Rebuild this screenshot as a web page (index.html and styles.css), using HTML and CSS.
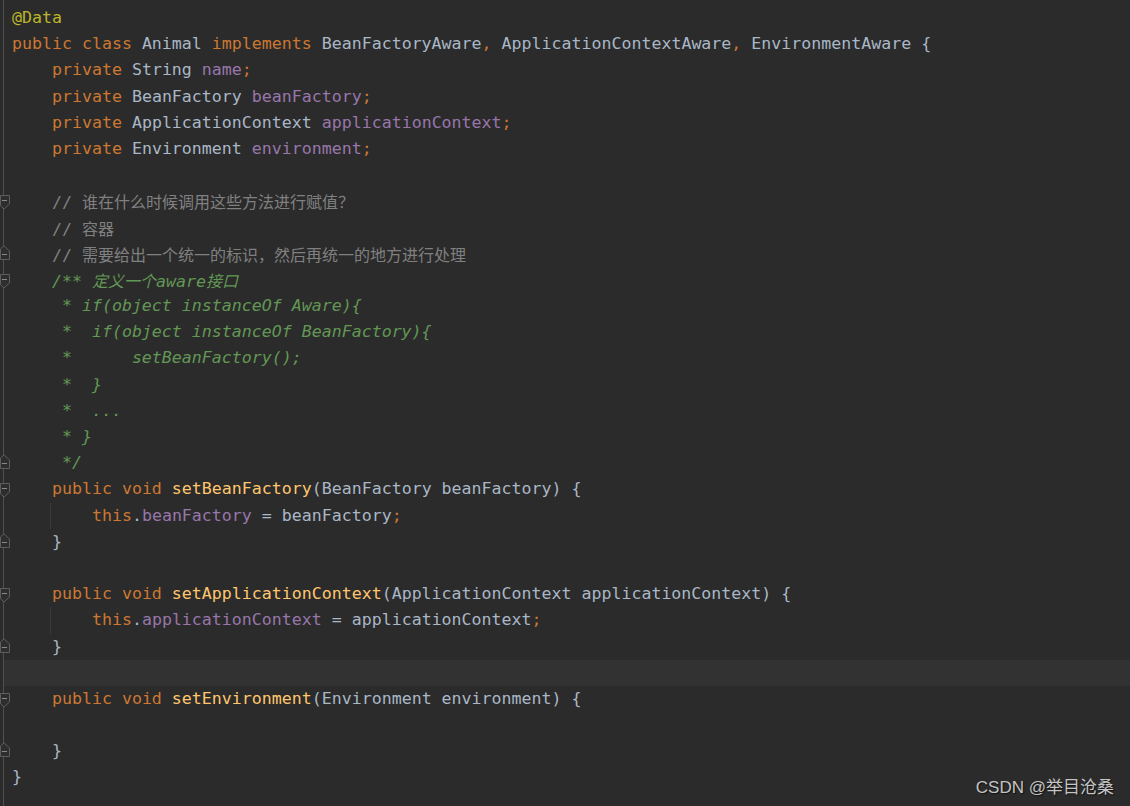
FILE: index.html
```html
<!doctype html>
<html>
<head>
	<meta charset='utf-8'>
	<title>Animal.java</title>

	<link rel="stylesheet" href="styles.css">
</head>
<body>

	<div class='editor'>
		<div class='line'><span class='gutter'></span><span class='code'><span class='ann'>@Data</span></span></div>
		<div class='line'><span class='gutter'></span><span class='code'><span class='kw'>public class </span>Animal <span class='kw'>implements </span>BeanFactoryAware<span class='kw'>, </span>ApplicationContextAware<span class='kw'>, </span>EnvironmentAware {</span></div>
		<div class='line'><span class='gutter'></span><span class='code'>    <span class='kw'>private </span>String <span class='fld'>name</span><span class='kw'>;</span></span></div>
		<div class='line'><span class='gutter'></span><span class='code'>    <span class='kw'>private </span>BeanFactory <span class='fld'>beanFactory</span><span class='kw'>;</span></span></div>
		<div class='line'><span class='gutter'></span><span class='code'>    <span class='kw'>private </span>ApplicationContext <span class='fld'>applicationContext</span><span class='kw'>;</span></span></div>
		<div class='line'><span class='gutter'></span><span class='code'>    <span class='kw'>private </span>Environment <span class='fld'>environment</span><span class='kw'>;</span></span></div>
		<div class='line'><span class='gutter'></span><span class='code'></span></div>

		<!-- comment block -->
		<div class='line'><span class='gutter'><svg class='fold down' width='10' height='15'><path d='M0.5 0.5H9.5V9L4 14L0.5 10.8Z'/><line x1='2' y1='5.5' x2='7' y2='5.5'/></svg></span><span class='code cm'>    // <span class='cjk'>谁在什么时候调用这些方法进行赋值？</span></span></div>
		<div class='line'><span class='gutter'></span><span class='code cm'>    // <span class='cjk'>容器</span></span></div>
		<div class='line'><span class='gutter'><svg class='fold up' width='10' height='15'><path d='M0.5 14.5H9.5V6L4 0.8L0.5 4Z'/><line x1='2' y1='9.5' x2='7' y2='9.5'/></svg></span><span class='code cm'>    // <span class='cjk'>需要给出一个统一的标识，然后再统一的地方进行处理</span></span></div>
		<div class='line'><span class='gutter'><svg class='fold down' width='10' height='15'><path d='M0.5 0.5H9.5V9L4 14L0.5 10.8Z'/><line x1='2' y1='5.5' x2='7' y2='5.5'/></svg></span><span class='code doc'>    /** <span class='cjk'>定义一个</span>aware<span class='cjk'>接口</span></span></div>
		<div class='line'><span class='gutter'></span><span class='code doc'>     * if(object instanceOf Aware){</span></div>
		<div class='line'><span class='gutter'></span><span class='code doc'>     *  if(object instanceOf BeanFactory){</span></div>
		<div class='line'><span class='gutter'></span><span class='code doc'>     *      setBeanFactory();</span></div>
		<div class='line'><span class='gutter'></span><span class='code doc'>     *  }</span></div>
		<div class='line'><span class='gutter'></span><span class='code doc'>     *  ...</span></div>
		<div class='line'><span class='gutter'></span><span class='code doc'>     * }</span></div>
		<div class='line'><span class='gutter'><svg class='fold up' width='10' height='15'><path d='M0.5 14.5H9.5V6L4 0.8L0.5 4Z'/><line x1='2' y1='9.5' x2='7' y2='9.5'/></svg></span><span class='code doc'>     */</span></div>

		<!-- setters -->
		<div class='line'><span class='gutter'><svg class='fold down' width='10' height='15'><path d='M0.5 0.5H9.5V9L4 14L0.5 10.8Z'/><line x1='2' y1='5.5' x2='7' y2='5.5'/></svg></span><span class='code'>    <span class='kw'>public void </span><span class='fn'>setBeanFactory</span>(BeanFactory beanFactory) {</span></div>
		<div class='line'><span class='gutter'></span><span class='code guide'>        <span class='kw'>this</span>.<span class='fld'>beanFactory</span> = beanFactory<span class='kw'>;</span></span></div>
		<div class='line'><span class='gutter'><svg class='fold up' width='10' height='15'><path d='M0.5 14.5H9.5V6L4 0.8L0.5 4Z'/><line x1='2' y1='9.5' x2='7' y2='9.5'/></svg></span><span class='code'>    }</span></div>
		<div class='line'><span class='gutter'></span><span class='code'></span></div>
		<div class='line'><span class='gutter'><svg class='fold down' width='10' height='15'><path d='M0.5 0.5H9.5V9L4 14L0.5 10.8Z'/><line x1='2' y1='5.5' x2='7' y2='5.5'/></svg></span><span class='code'>    <span class='kw'>public void </span><span class='fn'>setApplicationContext</span>(ApplicationContext applicationContext) {</span></div>
		<div class='line'><span class='gutter'></span><span class='code guide'>        <span class='kw'>this</span>.<span class='fld'>applicationContext</span> = applicationContext<span class='kw'>;</span></span></div>
		<div class='line'><span class='gutter'><svg class='fold up' width='10' height='15'><path d='M0.5 14.5H9.5V6L4 0.8L0.5 4Z'/><line x1='2' y1='9.5' x2='7' y2='9.5'/></svg></span><span class='code'>    }</span></div>
		<div class='line current'><span class='gutter'></span><span class='code'></span></div>
		<div class='line'><span class='gutter'><svg class='fold down' width='10' height='15'><path d='M0.5 0.5H9.5V9L4 14L0.5 10.8Z'/><line x1='2' y1='5.5' x2='7' y2='5.5'/></svg></span><span class='code'>    <span class='kw'>public void </span><span class='fn'>setEnvironment</span>(Environment environment) {</span></div>
		<div class='line'><span class='gutter'></span><span class='code'></span></div>
		<div class='line'><span class='gutter'><svg class='fold up' width='10' height='15'><path d='M0.5 14.5H9.5V6L4 0.8L0.5 4Z'/><line x1='2' y1='9.5' x2='7' y2='9.5'/></svg></span><span class='code'>    }</span></div>
		<div class='line'><span class='gutter'></span><span class='code'>}</span></div>

		<div class='watermark'>CSDN @举目沧桑</div>
	</div>

</body>
</html>
```

FILE: styles.css
```css
body {
	margin: 0;
	background: #2b2b2b;
}

/* The editor pane, with the thin gutter rule at x=3 */
.editor {
	position: relative;
	height: 806px;
	overflow: hidden;
	box-sizing: border-box;
	padding-top: 5px;
	background: linear-gradient(#505050, #505050) 3px 0 / 1px 100% no-repeat, #2b2b2b;
	font-family: "DejaVu Sans Mono", "Noto Sans CJK SC", monospace;
	font-size: 16.6px;
	color: #a9b7c6;
}

.line {
	display: flex;
	height: 26.2px;
	line-height: 26.2px;
}

/* caret row */
.line.current {
	background: linear-gradient(#323232, #323232) 4px 0 / 100% 100% no-repeat;
}

.gutter {
	flex: none;
	width: 12px;
}

.code {
	white-space: pre;
}

/* indent guide inside method bodies */
.code.guide {
	background: linear-gradient(#3b3b3b, #3b3b3b) 38px 0 / 1px 100% no-repeat;
}

/* fold markers */
.fold {
	display: block;
}

.fold.down {
	margin-top: 7px;
}

.fold.up {
	margin-top: 4px;
}

.fold path {
	fill: #2e2e2e;
	stroke: #5e5e5e;
	stroke-width: 1;
}

.fold line {
	stroke: #8a8a8a;
	stroke-width: 1;
}

/* syntax colours */
.kw {
	color: #cc7832;
}

.fld {
	color: #9876aa;
}

.fn {
	color: #ffc66d;
}

.ann {
	color: #bbb529;
}

.cm {
	color: #808080;
}

.doc {
	color: #629755;
	font-style: italic;
}

.cjk {
	font-family: "Noto Sans CJK SC", sans-serif;
	font-size: 16px;
}

/* site watermark laid over the bottom right corner */
.watermark {
	position: absolute;
	right: 16px;
	bottom: 8px;
	font-family: "Liberation Sans", "Noto Sans CJK SC", sans-serif;
	font-size: 17px;
	line-height: 20px;
	color: #c4c4c4;
	text-shadow: 1px 1px 1px #111;
}
```
